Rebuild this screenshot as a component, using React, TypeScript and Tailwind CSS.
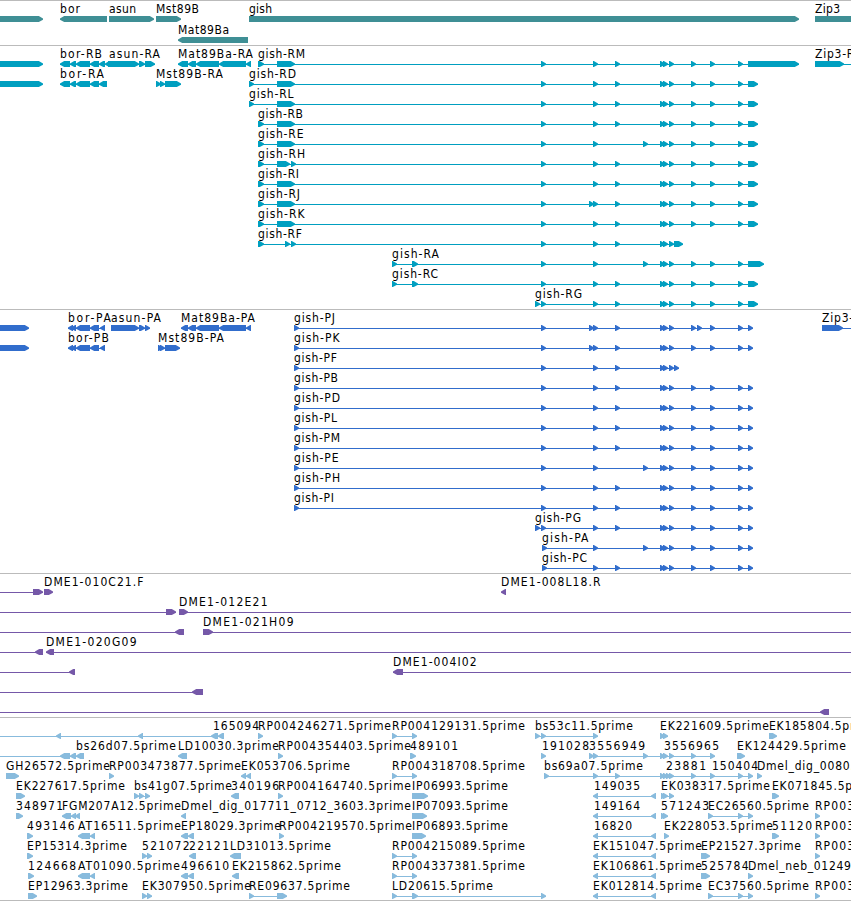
type Span = [number, number];
type Label = [x: number, text: string, end: number];
type Feature = { dir: 'l' | 'r'; exons: Span[]; line?: Span };
type Row = { labels: Label[]; features: Feature[]; tall?: boolean };
type Track = { name: string; color: string; rows: Row[]; pad: string };

const r = (exons: Span[], line?: Span): Feature => ({ dir: 'r', exons, line });
const l = (exons: Span[], line?: Span): Feature => ({ dir: 'l', exons, line });
const row = (labels: Label[], features: Feature[], tall = false): Row => ({ labels, features, tall });
const tick = (...xs: number[]): Span[] => xs.map((x): Span => [x, x + 5]);

const MID = tick(541, 593, 615, 660, 663, 669, 691, 710, 738);
const MID_ALT = tick(541, 593, 643, 660, 663, 669, 691, 710, 738);
const MID_EXTRA = tick(541, 589, 593, 615, 660, 663, 669, 691, 710, 738);
const TAIL: Span = [748, 758];
const BIG: Span = [277, 295];

const genes: Row[] = [
  row(
    [[60, 'bor', 80], [109, 'asun', 136], [156, 'Mst89B', 199], [249, 'gish', 272], [815, 'Zip3', 840]],
    [r([[-9, 43]]), l([[60, 107]]), r([[109, 154]]), r([[156, 181]]), r([[249, 799]]), r([[815, 870]])],
    true,
  ),
  row([[178, 'Mat89Ba', 229]], [l([[178, 248]])]),
];

const matExons: Span[] = [[178, 188], [188, 196], [196, 219], [219, 246], [246, 251]];
const borExons: Span[] = [[60, 70], [70, 76], [76, 90], [90, 99], [99, 107]];

const transcripts: Row[] = [
  row(
    [[60, 'bor-RB', 102], [109, 'asun-RA', 160], [178, 'Mat89Ba-RA', 253], [258, 'gish-RM', 305], [815, 'Zip3-RA', 862]],
    [
      r([[-9, 43]]),
      l([[60, 70], [70, 76], [76, 90], [90, 99], [99, 105]]),
      l([[105, 112]]),
      r([[108, 139], [139, 145], [145, 155]]),
      l(matExons),
      r([[258, 264], BIG, ...MID, [748, 799]]),
      r([[815, 844]], [815, 860]),
    ],
  ),
  row(
    [[60, 'bor-RA', 104], [156, 'Mst89B-RA', 223], [249, 'gish-RD', 296]],
    [r([[-9, 43]]), l(borExons), r([[156, 161], [160, 165], [165, 181]]), r([[249, 254], BIG, ...MID, TAIL])],
  ),
  row([[249, 'gish-RL', 293.5]], [r([[249, 254], BIG, ...MID, TAIL])]),
  row([[258, 'gish-RB', 303]], [r([[258, 264], BIG, ...MID, TAIL])]),
  row([[258, 'gish-RE', 303.5]], [r([[258, 264], BIG, ...MID_ALT, TAIL])]),
  row([[258, 'gish-RH', 305]], [r([[258, 264], [277, 290], [291, 296], ...MID, TAIL])]),
  row([[258, 'gish-RI', 299]], [r([[258, 264], BIG, ...MID, TAIL])]),
  row([[258, 'gish-RJ', 300]], [r([[258, 264], BIG, ...MID_EXTRA, TAIL])]),
  row([[258, 'gish-RK', 304.5]], [r([[258, 264], BIG, ...MID, TAIL])]),
  row([[258, 'gish-RF', 302]], [r([[258, 264], [285, 290], [291, 296], ...tick(541, 593, 615, 660, 663, 669), [674, 683]])]),
  row([[392, 'gish-RA', 439]], [r([[392, 397], [412, 418], ...MID_ALT, [748, 764]])]),
  row([[392, 'gish-RC', 438]], [r([[392, 397], [412, 418], ...MID, TAIL])]),
  row([[535, 'gish-RG', 582]], [r([[535, 540], ...MID, TAIL])]),
];

const END: Span = [748, 753];
const borCds: Span[] = [[68, 73], [71, 76], [76, 90], [90, 99], [100, 105]];

const proteins: Row[] = [
  row(
    [[68, 'bor-PA', 111], [111, 'asun-PA', 161], [181, 'Mat89Ba-PA', 255], [294, 'gish-PJ', 335], [822, 'Zip3-PA', 868]],
    [
      r([[-9, 29]]),
      l(borCds),
      r([[111, 139], [139, 145], [145, 150]]),
      l([[181, 188], [188, 196], [196, 219], [219, 246], [246, 251]]),
      r([[294, 299], ...tick(541, 589, 593, 615, 660, 663, 669, 691, 697, 710, 738), END]),
      r([[822, 843]], [822, 860]),
    ],
  ),
  row(
    [[68, 'bor-PB', 109], [158, 'Mst89B-PA', 224], [294, 'gish-PK', 339.5]],
    [r([[-9, 29]]), l(borCds), r([[158, 163], [160, 165], [165, 180]]), r([[294, 299], ...MID_EXTRA, END])],
  ),
  row([[294, 'gish-PF', 337]], [r([[294, 299], ...tick(541, 593, 615, 660, 663, 669, 674)])]),
  row([[294, 'gish-PB', 338]], [r([[294, 299], ...MID, END])]),
  row([[294, 'gish-PD', 340]], [r([[294, 299], ...MID, END])]),
  row([[294, 'gish-PL', 337]], [r([[294, 299], ...MID, END])]),
  row([[294, 'gish-PM', 340]], [r([[294, 299], ...MID, END])]),
  row([[294, 'gish-PE', 338.5]], [r([[294, 299], ...MID_ALT, END])]),
  row([[294, 'gish-PH', 340]], [r([[294, 299], ...MID, END])]),
  row([[294, 'gish-PI', 334]], [r([[294, 299], ...MID, END])]),
  row([[535, 'gish-PG', 581]], [r([[535, 540], ...MID, END])]),
  row([[542, 'gish-PA', 588.5]], [r([[542, 547], ...MID_ALT.slice(1), END])]),
  row([[542, 'gish-PC', 587]], [r([[542, 547], ...MID.slice(1), END])]),
];

const clones: Row[] = [
  row([[44, 'DME1-010C21.F', 143.5], [501, 'DME1-008L18.R', 600.5]], [r([[33, 43]], [0, 43]), r([[44, 53]]), l([[501, 506]])]),
  row([[179, 'DME1-012E21', 267.5]], [r([[166, 176]], [0, 176]), r([[179, 188]], [179, 860])]),
  row([[203, 'DME1-021H09', 293.5]], [l([[175, 184]], [0, 184]), r([[203, 213]], [203, 860])]),
  row([[46, 'DME1-020G09', 136.5]], [l([[35, 43]], [0, 43]), l([[46, 54]], [46, 860])]),
  row([[393, 'DME1-004I02', 476.5]], [l([[69, 75]], [0, 75]), l([[393, 403]], [393, 860])]),
  row([], [l([[192, 203]], [0, 203])]),
  row([], [l([[820, 829]], [0, 829])]),
];

const LEFT_PAIR = l([[593, 598], [651, 656]]);
const RIGHT_PAIR = r([[392, 397], [412, 417]]);
const AT_PAIR = l([[78, 90], [90, 95]]);

const cdnas: Row[] = [
  row(
    [[213, '165094', 259], [258, 'RP004246271.5prime', 391], [392, 'RP004129131.5prime', 525], [535, 'bs53c11.5prime', 633], [660, 'EK221609.5prime', 769], [769, 'EK185804.5prime', 877]],
    [l([[56, 61], [138, 143], [211, 218], [218, 224]], [0, 224]), r([[258, 263]]), RIGHT_PAIR, r(tick(535, 541, 593)), r(tick(660, 663)), r([[769, 777]])],
  ),
  row(
    [[76, 'bs26d07.5prime', 176], [178, 'LD10030.3prime', 279], [278, 'RP004354403.5prime', 411], [410, '489101', 458], [542, '191028', 589], [589, '3556949', 645], [664, '3556965', 719], [737, 'EK124429.5prime', 846]],
    [l([[60, 70], [70, 76], [76, 84]], [0, 84]), l([[178, 187]]), r([[278, 283]]), r([[410, 416]]), r([[541, 546]]), r(tick(589, 593, 643, 660, 663, 669, 691, 710)), r([[737, 745]])],
  ),
  row(
    [[6, 'GH26572.5prime', 110], [109, 'RP003473877.5prime', 241], [241, 'EK053706.5prime', 350], [392, 'RP004318708.5prime', 525], [544, 'bs69a07.5prime', 643], [666, '23881', 706], [712, '150404', 758], [757, 'Dmel_dig_008053.5prime', 912]],
    [r([[6, 19]]), r([[109, 114]]), l(tick(241, 246)), RIGHT_PAIR, r(tick(544, 593, 615, 660, 663, 666, 669, 691, 710, 738, 748)), r([[757, 762]])],
  ),
  row(
    [[16, 'EK227617.5prime', 125], [134, 'bs41g07.5prime', 232], [231, '340196', 279], [278, 'RP004164740.5prime', 411], [412, 'IP06993.5prime', 508], [594, '149035', 640], [661, 'EK038317.5prime', 770], [772, 'EK071845.5prime', 880]],
    [r([[16, 25]]), r(tick(134, 139, 145)), l([[231, 239]]), r([[278, 283]]), r([[412, 428]]), LEFT_PAIR, r(tick(661, 663, 669)), r([[772, 779]])],
  ),
  row(
    [[16, '348971', 63], [62, 'FGM207A12.5prime', 181], [181, 'Dmel_dig_017711_0712_3603.3prime', 411], [412, 'IP07093.5prime', 508], [594, '149164', 640], [661, '571243', 709], [708, 'EC26560.5prime', 809], [815, 'RP003', 854]],
    [r([[16, 23]]), l([[62, 71], [71, 76], [75, 80]]), l([[181, 186]]), r([[412, 427]]), LEFT_PAIR, r(tick(661, 663)), r(tick(708, 738, 748)), r([[815, 820]])],
  ),
  row(
    [[27, '493146', 74.5], [78, 'AT16511.5prime', 181], [181, 'EP18029.3prime', 281], [279, 'RP004219570.5prime', 412], [412, 'IP06893.5prime', 508], [594, '16820', 632], [664, 'EK228053.5prime', 773], [772, '51120', 812], [815, 'RP003', 854]],
    [r([[27, 33]]), AT_PAIR, l([[181, 188], [188, 194]]), r([[279, 284]]), r([[412, 426]]), LEFT_PAIR, r([[664, 669]]), r([[772, 779]]), r([[815, 820]])],
  ),
  row(
    [[27, 'EP15314.3prime', 127], [142, '521072', 189.5], [189, '22121', 229], [230, 'LD31013.5prime', 331], [392, 'RP004215089.5prime', 525], [593, 'EK151047.5prime', 702], [701, 'EP21527.3prime', 801], [815, 'RP003', 854]],
    [r([[27, 33]]), r(tick(142, 147)), l([[189, 196]]), l([[230, 241]]), RIGHT_PAIR, LEFT_PAIR, r([[701, 710]]), r([[815, 820]])],
  ),
  row(
    [[28, '124668', 76], [78, 'AT01090.5prime', 180], [181, '496610', 229], [232, 'EK215862.5prime', 341], [392, 'RP004337381.5prime', 525], [593, 'EK106861.5prime', 702], [701, '525784', 748.5], [748, 'Dmel_neb_012493.5prime', 905]],
    [r([[28, 34]]), AT_PAIR, l([[181, 188], [188, 194]]), l([[232, 239]]), RIGHT_PAIR, LEFT_PAIR, r([[701, 710]]), r([[748, 753]])],
  ),
  row(
    [[28, 'EP12963.3prime', 128], [142, 'EK307950.5prime', 251], [249, 'RE09637.5prime', 350], [392, 'LD20615.5prime', 493], [593, 'EK012814.5prime', 702], [708, 'EC37560.5prime', 809], [815, 'RP003', 854]],
    [r([[28, 37]]), r(tick(142, 147)), r([[249, 254], [277, 287]]), r([[392, 397], [412, 418], [541, 546]]), LEFT_PAIR, r(tick(708, 738, 748)), r([[815, 820]])],
  ),
];

const tracks: Track[] = [
  { name: 'genes', color: 'text-[#3f8f95]', rows: genes, pad: 'pb-0.5' },
  { name: 'transcripts', color: 'text-[#009fc0]', rows: transcripts, pad: 'pb-0.5' },
  { name: 'proteins', color: 'text-[#316dcc]', rows: proteins, pad: 'pb-0.5' },
  { name: 'clones', color: 'text-[#7558a8]', rows: clones, pad: 'pb-0.5' },
  { name: 'cdnas', color: 'text-[#88bbdd]', rows: cdnas, pad: 'border-b pb-px' },
];

// A block whose leading end narrows to a blunt point over at most five pixels.
function arrowPath([a, b]: Span, dir: 'l' | 'r'): string {
  const [tip, back, s] = dir === 'r' ? [b, a, 1] : [a, b, -1];
  const at = (d: number) => tip - s * d;
  return `M${back} 14H${at(4.2)}L${at(0)} 16.4V17.8L${at(4.2)} 20H${back}Z`;
}

function Glyph({ feature }: { feature: Feature }) {
  const { exons, dir } = feature;
  const [from, to] = feature.line ?? [exons[0][0], exons[exons.length - 1][1]];
  const needsLine = exons.length > 1 || feature.line;
  return (
    <g fill="currentColor">
      {needsLine && <rect x={from} y={17} width={to - from} height={1} />}
      {exons.map((e, i) => (
        <path key={i} d={arrowPath(e, dir)} />
      ))}
    </g>
  );
}

function TrackRow({ data }: { data: Row }) {
  return (
    <svg width="851" height={data.tall ? 21 : 20} className="block shrink-0 overflow-visible">
      {data.features.map((f, i) => (
        <Glyph key={i} feature={f} />
      ))}
      {data.labels.map(([x, text, end]) => (
        <text key={x} x={x} y={11} textLength={end - x} className="fill-black text-[12px]">
          {text}
        </text>
      ))}
    </svg>
  );
}

export default function App() {
  return (
    <main className="flex h-[901px] w-[851px] flex-col overflow-hidden bg-white font-['DejaVu_Sans_Condensed','DejaVu_Sans',sans-serif] [font-stretch:semi-condensed]">
      {tracks.map((t) => (
        <section key={t.name} className={`flex flex-col border-t border-[#bbbbbb] pt-px ${t.color} ${t.pad}`}>
          {t.rows.map((data, i) => (
            <TrackRow key={i} data={data} />
          ))}
        </section>
      ))}
    </main>
  );
}
